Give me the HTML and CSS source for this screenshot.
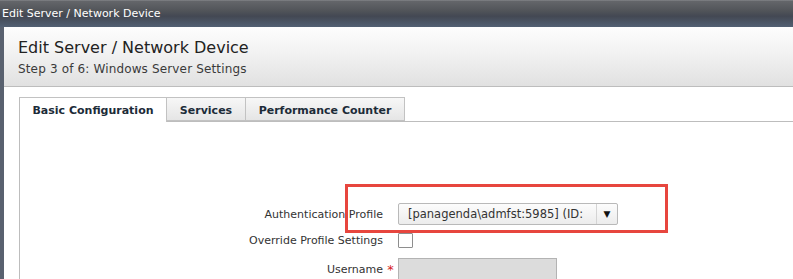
FILE: index.html
```html
<!DOCTYPE html>
<html lang="en">
<head>
    <meta charset="UTF-8">
    <title>Edit Server / Network Device</title>
    <link rel="stylesheet" href="styles.css">
</head>
<body>
    <div class="window">
        <div class="titlebar">Edit Server / Network Device</div>
        <div class="content">
            <div class="header">
                <h1>Edit Server / Network Device</h1>
                <div class="subtitle">Step 3 of 6: Windows Server Settings</div>
            </div>

            <div class="tabs">
                <div class="tab active tab-basic">Basic Configuration</div>
                <div class="tab tab-services">Services</div>
                <div class="tab tab-perf">Performance Counter</div>
            </div>

            <div class="panel">
                <div class="form">
                    <div class="row row-profile">
                        <label class="label">Authentication Profile</label>
                        <span class="mark"></span>
                        <div class="select">
                            <span class="select-text">[panagenda\admfst:5985] (ID:</span>
                            <span class="select-arrow">&#9660;</span>
                        </div>
                        <div class="highlight"></div>
                    </div>
                    <div class="row row-override">
                        <label class="label">Override Profile Settings</label>
                        <span class="mark"></span>
                        <span class="checkbox"></span>
                    </div>
                    <div class="row row-user">
                        <label class="label">Username</label>
                        <span class="mark required">*</span>
                        <div class="input"></div>
                    </div>
                </div>
            </div>
        </div>
    </div>
</body>
</html>
```

FILE: styles.css
```css
body {
    margin: 0;
    font-family: "DejaVu Sans", sans-serif;
    font-size: 11px;
    color: #333;
    background: #59616f;
    overflow: hidden;
}
.window {
    width: 793px;
    height: 279px;
    background: #59616f;
}
.titlebar {
    height: 15px;
    line-height: 15px;
    padding: 6px 0 6px 2px;
    color: #fff;
    background: linear-gradient(#8a8c90 0, #64666a 4%, #515459 40%, #434853 60%, #526073 100%);
}
.content {
    margin-left: 4px;
    height: 252px;
    background: #fff;
}
.header {
    height: 59px;
    padding-left: 14px;
    border-bottom: 1px solid #bdbdbd;
    background: linear-gradient(#fdfdfd, #f3f3f3 40%, #e1e1e1);
}
.header h1 {
    margin: 0;
    padding-top: 11px;
    font-size: 16px;
    line-height: 20px;
    font-weight: normal;
    color: #222;
}
.subtitle {
    margin-top: 4px;
    font-size: 12px;
    line-height: 15px;
    letter-spacing: 0.15px;
    color: #3a3a3a;
}
.tabs {
    display: flex;
    margin: 10px 0 0 15px;
    border-bottom: 1px solid #bdbdbd;
}
.tab {
    box-sizing: border-box;
    height: 24px;
    line-height: 25px;
    text-align: center;
    font-weight: bold;
    color: #1c2b38;
    border: 1px solid #c2c2c2;
    border-left: none;
    background: linear-gradient(#f7f7f7, #e5e5e5);
}
.tab.active {
    height: 25px;
    margin-bottom: -1px;
    border-left: 1px solid #bdbdbd;
    border-bottom: none;
    background: #fff;
    line-height: 26px;
}
.tab-basic { width: 148px; }
.tab-services { width: 79px; }
.tab-perf { width: 159px; }
.panel {
    margin-left: 15px;
    height: 160px;
    border-left: 1px solid #bdbdbd;
    padding-top: 81px;
    box-sizing: border-box;
}
.row {
    display: grid;
    grid-template-columns: 363px 15px auto;
    align-items: center;
    position: relative;
}
.row-profile { height: 22px; }
.row-override { height: 14px; margin-top: 8px; }
.row-user { height: 22px; margin-top: 11px; }
.label {
    text-align: right;
    color: #333;
}
.mark {
    text-align: center;
}
.required {
    color: #d62020;
    font-size: 13px;
}
.select {
    display: flex;
    width: 220px;
    height: 22px;
    box-sizing: border-box;
    border: 1px solid #b9b9b9;
    border-radius: 2px;
    background: linear-gradient(#fcfcfc, #ececec);
}
.select-text {
    flex: 1;
    white-space: nowrap;
    padding-left: 9px;
    font-size: 11.5px;
    line-height: 20px;
    color: #333;
}
.select-arrow {
    width: 20px;
    border-left: 1px solid #d4d4d4;
    text-align: center;
    font-size: 9px;
    line-height: 20px;
    color: #111;
}
.checkbox {
    width: 13px;
    height: 13px;
    border: 1px solid #8e8e8e;
    border-radius: 1px;
    background: #fff;
}
.input {
    width: 159px;
    height: 22px;
    box-sizing: border-box;
    border: 1px solid #b3b3b3;
    background: #dcdcdc;
}
.highlight {
    position: absolute;
    left: 325px;
    top: -19px;
    width: 323px;
    height: 49px;
    box-sizing: border-box;
    border: 3px solid #e7463e;
}
```
